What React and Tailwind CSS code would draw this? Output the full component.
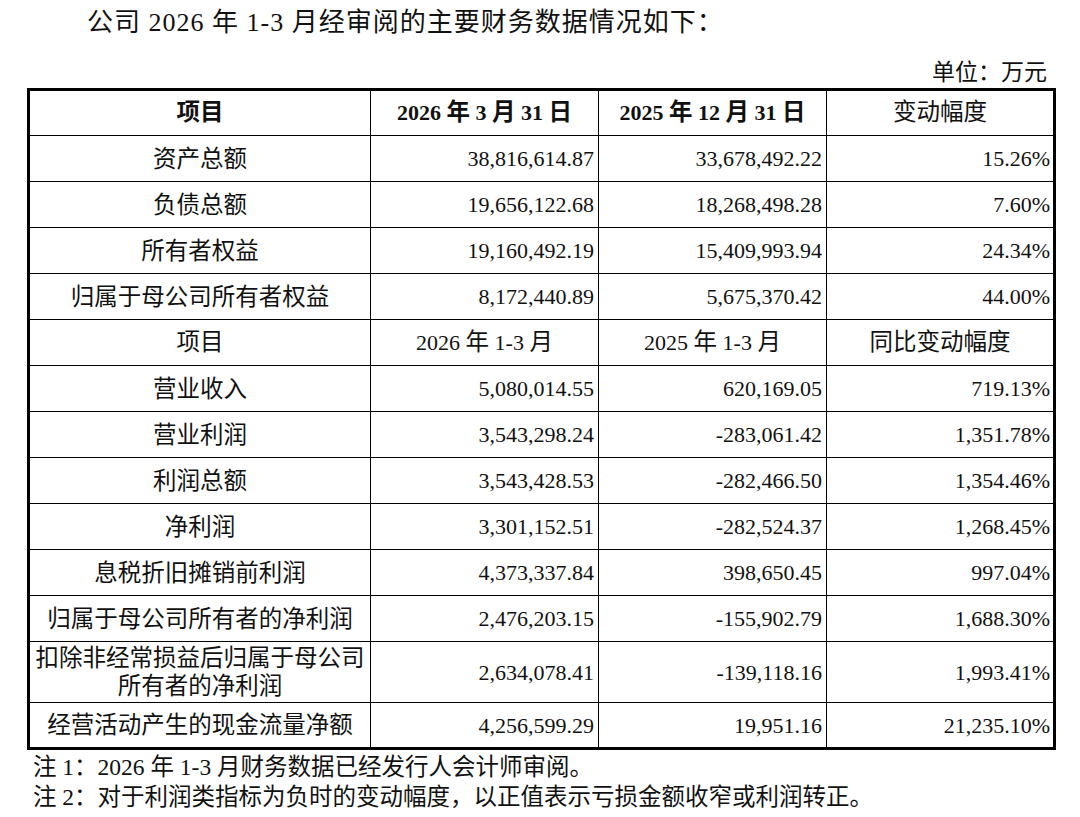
import React from 'react';

const balanceRows = [
  ['资产总额', '38,816,614.87', '33,678,492.22', '15.26%'],
  ['负债总额', '19,656,122.68', '18,268,498.28', '7.60%'],
  ['所有者权益', '19,160,492.19', '15,409,993.94', '24.34%'],
  ['归属于母公司所有者权益', '8,172,440.89', '5,675,370.42', '44.00%'],
];

const incomeRows = [
  ['营业收入', '5,080,014.55', '620,169.05', '719.13%'],
  ['营业利润', '3,543,298.24', '-283,061.42', '1,351.78%'],
  ['利润总额', '3,543,428.53', '-282,466.50', '1,354.46%'],
  ['净利润', '3,301,152.51', '-282,524.37', '1,268.45%'],
  ['息税折旧摊销前利润', '4,373,337.84', '398,650.45', '997.04%'],
  ['归属于母公司所有者的净利润', '2,476,203.15', '-155,902.79', '1,688.30%'],
  [['扣除非经常损益后归属于母公司', '所有者的净利润'], '2,634,078.41', '-139,118.16', '1,993.41%'],
  ['经营活动产生的现金流量净额', '4,256,599.29', '19,951.16', '21,235.10%'],
];

const font = { fontFamily: '"Liberation Serif", "Noto Sans CJK SC", serif' };

// CJK glyphs in the source are a touch wider than the Latin digits, so bump them
function Cn({ children }) {
  return String(children)
    .split(/([\u3000-\u9fff\uff00-\uffef]+)/)
    .map((part, i) =>
      /[\u3000-\u9fff\uff00-\uffef]/.test(part)
        ? <span key={i} className="text-[23.5px]">{part}</span>
        : part
    );
}

function DataRow({ row }) {
  const [name, a, b, c] = row;
  const tall = Array.isArray(name);
  return (
    <tr className={tall ? 'h-[61px]' : 'h-[46px]'}>
      <td className="border border-black text-center leading-[28px] px-1 text-[23.5px]">
        {tall ? name.map(n => <div key={n}>{n}</div>) : name}
      </td>
      <td className="border border-black text-right pr-[4px]">{a}</td>
      <td className="border border-black text-right pr-[4px]">{b}</td>
      <td className="border border-black text-right pr-[3px]">{c}</td>
    </tr>
  );
}

export default function App() {
  return (
    <div className="w-[1080px] h-[817px] bg-white text-[#111] text-[22px] overflow-hidden" style={font}>
      <p className="pl-[87px] leading-[46px] text-[26px] tracking-[1px]">公司 2026 年 1-3 月经审阅的主要财务数据情况如下：</p>
      <p className="text-right pr-[33px] mt-[12px] leading-[30px] text-[23px]">单位：万元</p>
      <table className="ml-[27px] w-[1026px] border-collapse border-[3px] border-black table-fixed">
        <colgroup>
          <col className="w-[342px]" />
          <col className="w-[228px]" />
          <col className="w-[228px]" />
          <col className="w-[228px]" />
        </colgroup>
        <tbody>
          <tr className="h-[46px] font-bold">
            <td className="border border-black text-center"><Cn>项目</Cn></td>
            <td className="border border-black text-center"><Cn>2026 年 3 月 31 日</Cn></td>
            <td className="border border-black text-center"><Cn>2025 年 12 月 31 日</Cn></td>
            <td className="border border-black text-center font-normal"><Cn>变动幅度</Cn></td>
          </tr>
          {balanceRows.map(r => <DataRow key={r[0]} row={r} />)}
          <tr className="h-[46px]">
            <td className="border border-black text-center"><Cn>项目</Cn></td>
            <td className="border border-black text-center"><Cn>2026 年 1-3 月</Cn></td>
            <td className="border border-black text-center"><Cn>2025 年 1-3 月</Cn></td>
            <td className="border border-black text-center"><Cn>同比变动幅度</Cn></td>
          </tr>
          {incomeRows.map(r => <DataRow key={r[1]} row={r} />)}
        </tbody>
      </table>
      <div className="pl-[33px] mt-[2px] text-[23.5px] leading-[30px]">
        <p>注 1：2026 年 1-3 月财务数据已经发行人会计师审阅。</p>
        <p>注 2：对于利润类指标为负时的变动幅度，以正值表示亏损金额收窄或利润转正。</p>
      </div>
    </div>
  );
}
